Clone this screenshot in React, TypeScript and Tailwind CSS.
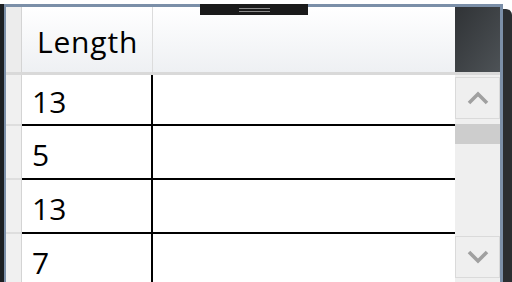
import React from "react";

const rows = ["13", "5", "13", "7"];

function Chevron({ up }: { up?: boolean }) {
  return (
    <svg width="22" height="14" viewBox="0 0 22 14">
      <path
        d={up ? "M2 12 L11 3 L20 12" : "M2 2 L11 11 L20 2"}
        fill="none"
        stroke="#a0a0a0"
        strokeWidth="3.6"
      />
    </svg>
  );
}

export default function App() {
  return (
    <div
      className="relative w-[512px] h-[282px] bg-white overflow-hidden flex flex-col"
      style={{ fontFamily: '"Open Sans", "Noto Sans", sans-serif' }}
    >
      <div className="h-[4px] bg-white shrink-0" />
      <div className="flex flex-1 min-h-0">
        <div className="w-[4px] bg-[#1c1f22] shrink-0" />
        <div className="flex-1 flex flex-col border-t-[3px] border-l-[2px] border-r-[3px] border-[#7b8fa8] min-w-0">
          {/* header */}
          <div className="flex h-[68px] shrink-0 border-b-[3px] border-[#d9d9d9]">
            <div className="w-[16px] bg-[#ececec] border-r border-[#d4d4d4]" />
            <div className="w-[131px] bg-gradient-to-b from-white to-[#eef0f3] border-r border-[#dcdcdc] flex items-center pl-[15px] pt-[5px] text-[30px] tracking-[0.8px] leading-none text-black">
              Length
            </div>
            <div className="flex-1 bg-gradient-to-b from-white to-[#eef0f3]" />
            <div className="w-[45px] bg-gradient-to-br from-[#303336] to-[#4d5256]" />
          </div>
          {/* body */}
          <div className="flex flex-1 min-h-0">
            <div className="flex-1 flex flex-col min-w-0">
              {rows.map((r, i) => (
                <div key={i} className="flex shrink-0">
                  <div className="w-[16px] bg-[#f0f0f0] border-r border-[#d4d4d4] shrink-0 flex flex-col">
                    {i > 0 && <div className="h-[2px] bg-[#dedede]" />}
                  </div>
                  <div
                    className={`flex-1 flex min-w-0 ${i === 0 ? "h-[49px]" : "h-[54px] border-t-2 border-black"}`}
                  >
                    <div className="w-[131px] border-r-2 border-black flex items-center pl-[10px] pt-[5px] text-[30px] leading-none text-black shrink-0">
                      {r}
                    </div>
                    <div className="flex-1 bg-white" />
                  </div>
                </div>
              ))}
            </div>
            <div className="w-[45px] bg-[#efefef] flex flex-col shrink-0">
              <div className="mt-[2px] h-[42px] border border-[#dadada] flex items-center justify-center">
                <Chevron up />
              </div>
              <div className="mt-[5px] h-[20px] bg-[#cdcdcd]" />
              <div className="flex-1" />
              <div className="mb-[4px] h-[42px] border border-[#dadada] flex items-center justify-center">
                <Chevron />
              </div>
            </div>
          </div>
        </div>
        <div className="w-[9px] bg-[#2b2e31] rounded-tr-[6px] mt-[5px] shrink-0" />
      </div>
      {/* drag handle overlay */}
      <div className="absolute left-[200px] top-[4px] w-[108px] h-[11px] bg-[#1a1a1a] flex flex-col items-center justify-center gap-[2px]">
        <div className="w-[31px] h-px bg-[#8a8a8a]" />
        <div className="w-[31px] h-px bg-[#8a8a8a]" />
      </div>
    </div>
  );
}
